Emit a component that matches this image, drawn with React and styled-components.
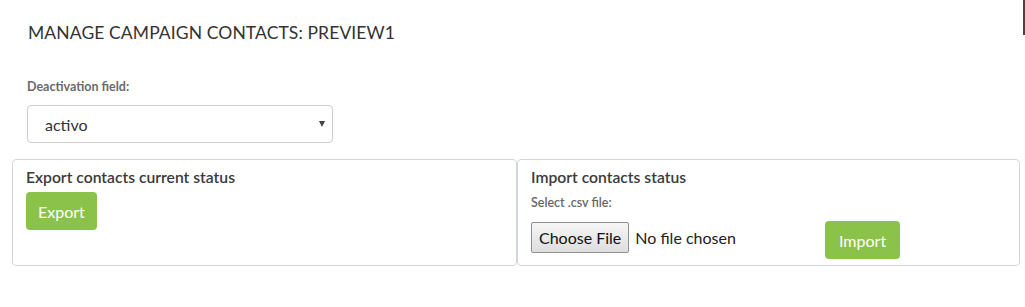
import React from "react";
import styled, { createGlobalStyle } from "styled-components";

const Global = createGlobalStyle`
  html, body { margin: 0; padding: 0; background: #fff; }
  body { font-family: Lato, "Open Sans", sans-serif; color: #333; }
  * { box-sizing: border-box; }
`;

const Page = styled.div`
  position: relative;
  width: 1025px;
  height: 307px;
  padding: 0 5px 0 12px;
`;

const EdgeMark = styled.div`
  position: absolute;
  top: 0;
  right: 0;
  width: 2px;
  height: 35px;
  background: #444;
`;

const Header = styled.div`
  padding: 22px 0 0 16px;
`;

const Title = styled.h1`
  margin: 0;
  font-size: 17.5px;
  font-weight: 400;
  color: #333;
  letter-spacing: 0.1px;
  line-height: 22px;
`;

const FieldGroup = styled.div`
  display: flex;
  flex-direction: column;
  padding: 35px 0 0 15px;
`;

const Label = styled.label`
  font-size: 12.5px;
  font-weight: 700;
  color: #6a6a6a;
  line-height: 16px;
  margin-bottom: 10px;
`;

const SelectBox = styled.div`
  width: 306px;
  height: 38px;
  border: 1px solid #ccc;
  border-radius: 4px;
  display: flex;
  align-items: center;
  justify-content: space-between;
  padding: 0 7px 0 17px;
  font-size: 16px;
  color: #333;
`;

const Caret = styled.span`
  width: 0;
  height: 0;
  border-left: 3px solid transparent;
  border-right: 3px solid transparent;
  border-top: 6px solid #444;
`;

const Panels = styled.div`
  display: grid;
  grid-template-columns: 505px 503px;
  margin-top: 16px;
`;

const Panel = styled.div`
  height: 107px;
  border: 1px solid #d2d6dc;
  border-radius: 4px;
  padding: 6px 12px 0 13px;
`;

const PanelTitle = styled.div`
  font-size: 15.7px;
  font-weight: 600;
  color: #3a3a3a;
  line-height: 22px;
`;

const GreenButton = styled.button`
  border: none;
  border-radius: 4px;
  background: #8bc34a;
  color: #fff;
  font-family: inherit;
  font-size: 16px;
  height: 38px;
  padding: 0 ${(p) => p.$px || 12}px;
  margin-top: ${(p) => p.$mt || 0}px;
`;

const SubLabel = styled.div`
  font-size: 12.5px;
  font-weight: 600;
  color: #666;
  margin-top: 7px;
  line-height: 16px;
`;

const FileRow = styled.div`
  display: flex;
  align-items: flex-start;
  margin-top: 7px;
`;

const FileInput = styled.div`
  display: flex;
  align-items: center;
  width: 294px;
  margin-top: 4px;
`;

const ChooseButton = styled.div`
  height: 31px;
  padding: 0 7px;
  display: flex;
  align-items: center;
  border: 1px solid #8f8f8f;
  border-radius: 2px;
  background: linear-gradient(#f6f6f6, #dedede);
  font-size: 16px;
  color: #111;
`;

const FileName = styled.span`
  margin-left: 6px;
  font-size: 16px;
  color: #222;
`;

export default function App() {
  return (
    <>
      <Global />
      <Page>
        <EdgeMark />
        <Header>
          <Title>MANAGE CAMPAIGN CONTACTS: PREVIEW1</Title>
        </Header>
        <FieldGroup>
          <Label>Deactivation field:</Label>
          <SelectBox>
            <span>activo</span>
            <Caret />
          </SelectBox>
        </FieldGroup>
        <Panels>
          <Panel>
            <PanelTitle>Export contacts current status</PanelTitle>
            <GreenButton $mt={4}>Export</GreenButton>
          </Panel>
          <Panel>
            <PanelTitle>Import contacts status</PanelTitle>
            <SubLabel>Select .csv file:</SubLabel>
            <FileRow>
              <FileInput>
                <ChooseButton>Choose File</ChooseButton>
                <FileName>No file chosen</FileName>
              </FileInput>
              <GreenButton $px={14} $mt={3}>Import</GreenButton>
            </FileRow>
          </Panel>
        </Panels>
      </Page>
    </>
  );
}
